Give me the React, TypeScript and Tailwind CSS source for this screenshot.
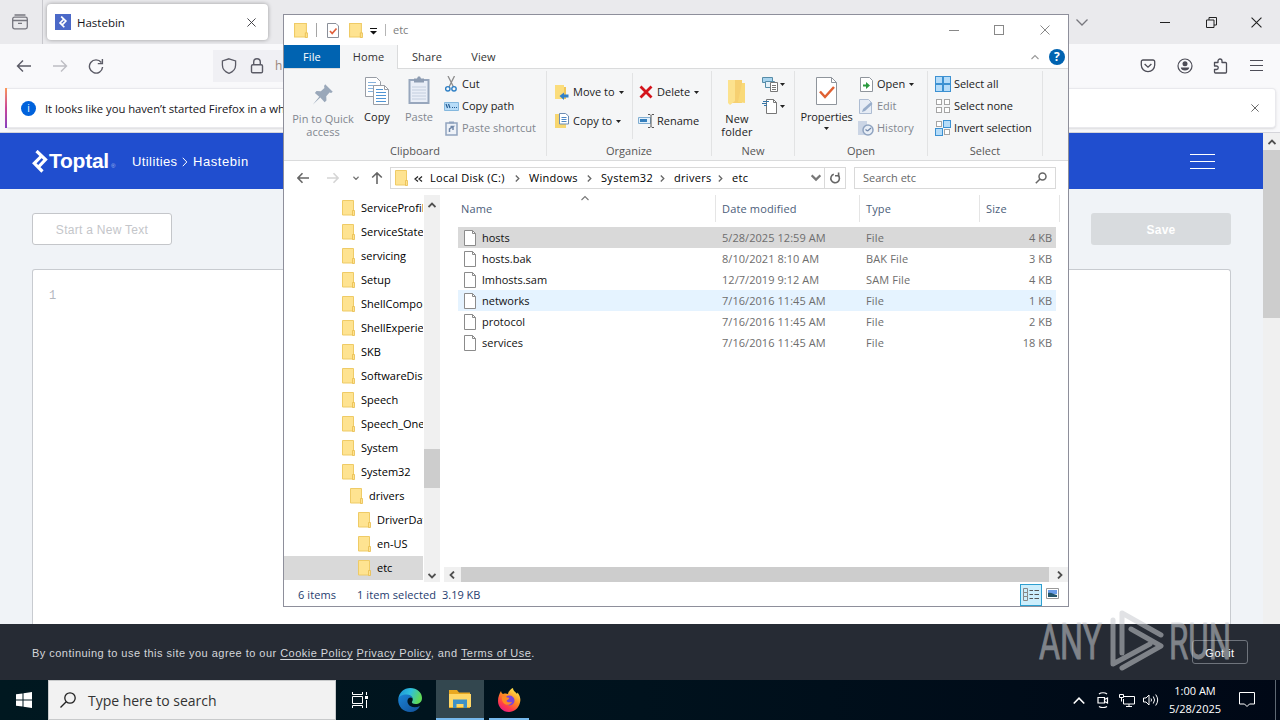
import type { ReactNode } from "react";
import clsx from "clsx";

const tree = [
  { name: "ServiceProfiles", depth: 0 },
  { name: "ServiceState", depth: 0 },
  { name: "servicing", depth: 0 },
  { name: "Setup", depth: 0 },
  { name: "ShellComponents", depth: 0 },
  { name: "ShellExperiences", depth: 0 },
  { name: "SKB", depth: 0 },
  { name: "SoftwareDistribution", depth: 0 },
  { name: "Speech", depth: 0 },
  { name: "Speech_OneCore", depth: 0 },
  { name: "System", depth: 0 },
  { name: "System32", depth: 0 },
  { name: "drivers", depth: 1 },
  { name: "DriverData", depth: 2 },
  { name: "en-US", depth: 2 },
  { name: "etc", depth: 2 },
];

const indent = ["pl-[58px]", "pl-[66px]", "pl-[74px]"];

const files = [
  { name: "hosts", date: "5/28/2025 12:59 AM", type: "File", size: "4 KB" },
  { name: "hosts.bak", date: "8/10/2021 8:10 AM", type: "BAK File", size: "3 KB" },
  { name: "lmhosts.sam", date: "12/7/2019 9:12 AM", type: "SAM File", size: "4 KB" },
  { name: "networks", date: "7/16/2016 11:45 AM", type: "File", size: "1 KB" },
  { name: "protocol", date: "7/16/2016 11:45 AM", type: "File", size: "2 KB" },
  { name: "services", date: "7/16/2016 11:45 AM", type: "File", size: "18 KB" },
];

type IconProps = { className?: string };

export default function App() {
  return (
    <div className="relative flex h-[720px] w-[1280px] flex-col overflow-hidden bg-[#f0f3f7] font-['Open_Sans',sans-serif] text-[11px] leading-4 text-black">
      <Browser />
      <Taskbar />
      <Explorer />
      <Watermark />
    </div>
  );
}

/* ---------- Browser ---------- */

function Browser() {
  return (
    <div className="flex h-[680px] flex-col">
      <div className="flex h-11 shrink-0 items-center bg-[#eaeaed] text-[#15141a]">
        <div className="flex h-11 w-[43px] items-center border-r border-[#c8c8cd] pl-3">
          <svg className="size-4" viewBox="0 0 16 16" fill="none" stroke="#77777f" strokeWidth="1.3">
            <path d="M3 1h10" strokeLinecap="round" />
            <rect x=".7" y="3.2" width="14.6" height="11.6" rx="1.8" />
            <path d="M.7 6.5h14.6M6 9.3h4" />
          </svg>
        </div>
        <div className="ml-1 flex h-9 w-[221px] items-center rounded bg-white pr-3 pl-2 shadow-[0_0_4px_rgba(0,0,0,0.35)]">
          <div className="flex size-4 items-center justify-center bg-[#4b69c8]">
            <ToptalMark className="h-3 w-2.5" />
          </div>
          <span className="ml-1.5 grow pt-px text-[11.5px]">Hastebin</span>
          <Cross className="size-[9px] text-[#33333a]" />
        </div>
        <div className="grow" />
        <svg className="mr-[72px] h-3 w-3" viewBox="0 0 12 12" fill="none" stroke="#77777d" strokeWidth="1.3">
          <path d="M.5 3.5 6 9l5.500-5.500" />
        </svg>
        <div className="mr-9 h-px w-2.5 bg-[#222]" />
        <svg className="mr-[34px] size-[11px]" viewBox="0 0 11 11" fill="none" stroke="#222">
          <path d="M.5 3h7.500v7.500H.5zM3 3V.5h7.500V8H8" />
        </svg>
        <Cross className="mr-[18px] size-[11px] text-[#222]" />
      </div>

      <div className="flex h-11 shrink-0 items-center bg-[#f9f9fb] text-[#5b5b66]">
        <svg className="ml-4 h-4 w-4" viewBox="0 0 16 16" fill="none" stroke="#5b5b66" strokeWidth="1.4">
          <path d="M15 5.500H1.500M7 0 1.500 5.500 7 11" transform="translate(0 2.500)" />
        </svg>
        <svg className="ml-5 h-4 w-4" viewBox="0 0 16 16" fill="none" stroke="#bdbdc3" strokeWidth="1.4">
          <path d="M1 8h13.500M9 2.500 14.500 8 9 13.500" />
        </svg>
        <svg className="ml-5 h-4 w-4" viewBox="0 0 16 16" fill="none" stroke="#5b5b66" strokeWidth="1.4">
          <path d="M13.300 4.500A6.600 6.600 0 1 0 14.600 9M14.400 1v4.600H9.800" />
        </svg>
        <div className="ml-[109px] flex h-8 w-[700px] items-center bg-[#f0f0f4] pl-2">
          <svg className="size-4" viewBox="0 0 16 16" fill="none" stroke="#5b5b66" strokeWidth="1.300">
            <path d="M8 .8 14.600 3v4c0 4-3 7-6.600 8.300C4.400 14 1.400 11 1.400 7V3z" />
          </svg>
          <svg className="ml-3 size-4" viewBox="0 0 16 16" fill="none" stroke="#5b5b66" strokeWidth="1.400">
            <rect x="2.500" y="6.800" width="11" height="8" rx="1.300" />
            <path d="M4.700 6.800V4a3.300 3.300 0 0 1 6.600 0v2.800" />
          </svg>
          <span className="ml-2.5 text-xs text-[#9a8578]">h</span>
        </div>
        <div className="grow" />
        <div className="flex w-[140px] items-center justify-between pr-[17px] text-[#4d4d57]">
          <svg className="size-4" viewBox="0 0 16 16" fill="none" stroke="currentColor" strokeWidth="1.300">
            <path d="M3 2h10a1.700 1.700 0 0 1 1.700 1.700V7A6.700 6.700 0 0 1 1.300 7V3.700A1.700 1.700 0 0 1 3 2z" />
            <path d="m4.600 6 3.400 3.200L11.400 6" />
          </svg>
          <svg className="size-4" viewBox="0 0 16 16" fill="none" stroke="currentColor" strokeWidth="1.200">
            <circle cx="8" cy="8" r="7" />
            <circle cx="8" cy="5.800" r="2.500" fill="currentColor" stroke="none" />
            <path d="M3.800 9.500h8.400c0 2-2 3-4.200 3s-4.200-1-4.200-3z" fill="currentColor" stroke="none" />
          </svg>
          <svg className="size-4" viewBox="0 0 16 16" fill="none" stroke="currentColor" strokeWidth="1.300">
            <path d="M1.500 4.500H5V3a2 2 0 0 1 4 0v1.500h3.500a1 1 0 0 1 1 1V14a1 1 0 0 1-1 1h-10a1 1 0 0 1-1-1v-2.500h2a1.700 1.700 0 0 0 0-3.500h-2z" strokeLinejoin="round" />
          </svg>
          <div className="-mt-0.5 flex w-[13px] flex-col gap-[4px]">
            <div className="h-px bg-current" />
            <div className="h-px bg-current" />
            <div className="h-px bg-current" />
          </div>
        </div>
      </div>

      <div className="flex h-[45px] shrink-0 border-b border-[#d5d5da] bg-[#f9f9fb] pb-1 pl-[5px]">
        <div className="h-10 w-[2px] bg-gradient-to-b from-[#ff9a56] via-[#d0459b] to-[#8a3fc4]" />
        <div className="flex h-10 w-[1269px] items-center rounded-r border border-l-0 border-[#e9e9ed] bg-white pr-4 pl-[14px] shadow-sm">
          <div className="flex size-[15px] items-center justify-center rounded-full bg-[#0062dc] text-[10px] text-white">i</div>
          <span className="ml-[9px] grow pt-px text-[11.300px] tracking-[-0.05px] whitespace-nowrap text-[#15141a]">
            It looks like you haven’t started Firefox in a while.
          </span>
          <Cross className="size-2 text-[#444]" />
        </div>
      </div>

      <div className="flex h-[491px] shrink-0">
        <Hastebin />
        <div className="flex w-[17px] shrink-0 flex-col bg-[#f0f0f0]">
          <div className="flex h-[17px] items-center justify-center">
            <Chevron className="w-2 text-[#505050]" dir="up" bold />
          </div>
          <div className="h-[168px] bg-[#cdcdcd]" />
        </div>
      </div>

      <div className="flex h-14 shrink-0 items-center bg-[#262b34] pr-8 pl-8 font-['Liberation_Sans',sans-serif] text-[#d4d6da]">
        <p className="grow pt-0.5 text-[11px] tracking-[0.47px]">
          By continuing to use this site you agree to our <u className="underline-offset-2">Cookie Policy</u>{" "}
          <u className="underline-offset-2">Privacy Policy</u>, and <u className="underline-offset-2">Terms of Use</u>.
        </p>
        <button className="h-6 w-14 rounded-[3px] border border-[#6f747c] pt-px text-[11px] tracking-[0.5px] text-white">Got it</button>
      </div>
    </div>
  );
}

function Hastebin() {
  return (
    <div className="flex w-[1263px] flex-col bg-[#f0f3f7] font-['Liberation_Sans',sans-serif]">
      <div className="flex h-14 shrink-0 items-center bg-[#204ecf] px-8 text-white">
        <ToptalMark className="h-[23px] w-[16px]" />
        <span className="ml-px w-[62px] text-[21px] font-bold tracking-[-0.25px]">Toptal</span>
        <span className="mt-2.5 w-[6px] text-[6px] text-[#a9b9ec]">®</span>
        <span className="ml-[15px] w-[45px] pt-px text-[13px] tracking-[0.4px]">Utilities</span>
        <svg className="mx-[5px] mt-0.5 h-2.5 w-[6px]" viewBox="0 0 6 10" fill="none" stroke="#fff">
          <path d="m.8.8 4 4.200-4 4.200" />
        </svg>
        <span className="pt-px text-[13px] tracking-[0.55px]">Hastebin</span>
        <div className="grow" />
        <div className="mr-4 flex w-[25px] flex-col gap-1.5">
          <div className="h-px bg-white" />
          <div className="h-px bg-white" />
          <div className="h-px bg-white" />
        </div>
      </div>
      <div className="flex h-20 shrink-0 items-center justify-between pr-8 pl-8">
        <button className="h-8 w-[140px] rounded-[3px] border border-[#c4c6ca] bg-white pt-px text-xs tracking-[0.28px] text-[#c4c6ca]">
          Start a New Text
        </button>
        <button className="h-8 w-[140px] rounded-[3px] bg-[#d8dbde] pt-px text-[12px] font-bold tracking-[0.2px] text-white">Save</button>
      </div>
      <div className="mr-8 ml-8 grow rounded-t-[3px] border border-b-0 border-[#c8cbd0] bg-white pt-[18px] pl-4 font-['Liberation_Mono',monospace] text-xs text-[#b4b8bf]">
        1
      </div>
    </div>
  );
}

/* ---------- Explorer window ---------- */

function Explorer() {
  return (
    <div className="absolute top-[14px] left-[283px] flex h-[593px] w-[786px] flex-col border border-[#8e8f9b] bg-white">
      <div className="flex h-[30px] shrink-0 items-center">
        <FolderIcon className="ml-[10px] h-[15px] w-[14px]" />
        <div className="ml-2 h-3.5 w-px bg-[#a5a5a5]" />
        <svg className="ml-2.5 h-[15px] w-3" viewBox="0 0 12 15">
          <path d="M.5.5H9L11.500 3v11.500H.5z" fill="#fff" stroke="#8a8f99" />
          <path d="m3 8 2.200 2.500L9.500 5.500" fill="none" stroke="#e0603c" strokeWidth="1.700" />
        </svg>
        <FolderIcon className="ml-2.5 h-[15px] w-[14px]" />
        <svg className="ml-[7px] mt-0.5 h-[7px] w-[7px]" viewBox="0 0 7 7">
          <path d="M0 0h7v1H0zM0 3h7L3.500 6.500z" fill="#111" />
        </svg>
        <div className="ml-2 h-3 w-px bg-[#b5b5b5]" />
        <span className="ml-[7px] grow text-[#7d7d7d]">etc</span>
        <div className="mr-[35px] h-px w-2.5 bg-[#888]" />
        <div className="mr-9 size-2.5 border border-[#888]" />
        <Cross className="mr-[18px] size-[10px] text-[#888]" />
      </div>

      <div className="flex h-6 shrink-0 border-b border-[#dadbdc] tracking-[0.1px] text-[#333]">
        <div className="flex h-[23px] w-14 items-center justify-center bg-[#0063b1] text-white">File</div>
        <div className="flex h-6 w-[58px] items-center justify-center border-r border-[#dadbdc] bg-[#f5f6f7]">Home</div>
        <div className="flex w-[58px] items-center justify-center">Share</div>
        <div className="flex w-[55px] items-center justify-center">View</div>
        <div className="grow" />
        <div className="mr-[3px] flex items-center gap-2.5">
          <Chevron className="w-2 text-[#999]" dir="up" />
          <div className="flex size-4 items-center justify-center rounded-full bg-[#0063b1] text-xs font-bold text-white">?</div>
        </div>
      </div>

      <Ribbon />

      <div className="flex h-[34px] shrink-0 items-center">
        <Arrow className="ml-[13px] size-3 text-[#666]" />
        <Arrow className="ml-[18px] size-3 rotate-180 text-[#d5d5d5]" />
        <Chevron className="ml-[14px] w-1.5 text-[#777]" dir="down" bold />
        <Arrow className="ml-3 size-3 rotate-90 text-[#666]" />
        <div className="ml-[7px] flex h-[22px] w-[456px] items-center border border-[#d9d9d9] pl-1 tracking-[0.3px]">
          <FolderIcon className="h-4 w-[13px]" />
          <svg className="mt-px mr-[7px] ml-[6px] h-[6px] w-[9px]" viewBox="0 0 9 6" fill="none" stroke="#222" strokeWidth="1.200">
            <path d="M4 .5 1 3l3 2.500M8 .5 5 3l3 2.500" />
          </svg>
          <span className="w-[76px]">Local Disk (C:)</span>
          <Crumb />
          <span className="w-[49px]">Windows</span>
          <Crumb />
          <span className="w-[50px]">System32</span>
          <Crumb />
          <span className="w-[35px]">drivers</span>
          <Crumb />
          <span className="grow">etc</span>
          <Chevron className="mr-[3px] w-2.5 text-[#777]" dir="down" bold />
          <div className="flex h-5 w-[21px] items-center justify-center border-l border-[#d9d9d9]">
            <svg className="size-3" viewBox="0 0 12 12" fill="none" stroke="#666" strokeWidth="1.600">
              <path d="M9 3.200A4.300 4.300 0 1 1 4.800 2.300" />
              <path d="M9.600.500v3.300H6" />
            </svg>
          </div>
        </div>
        <div className="ml-2 flex h-[22px] w-[202px] items-center justify-between border border-[#d9d9d9] pr-2 pl-2 text-[#666]">
          <span>Search etc</span>
          <svg className="size-3" viewBox="0 0 12 12" fill="none" stroke="#666" strokeWidth="1.500">
            <circle cx="7.500" cy="4.500" r="3.500" />
            <path d="M5 7 .8 11.200" />
          </svg>
        </div>
      </div>

      <div className="flex h-[387px] shrink-0">
        <div className="w-[139px] shrink-0 overflow-hidden pt-px">
          {tree.map((node) => (
            <div
              key={node.name}
              className={clsx(
                "flex h-6 items-center overflow-hidden whitespace-nowrap",
                indent[node.depth],
                node.name === "etc" && "bg-[#d9d9d9]",
              )}
            >
              <FolderIcon className="h-4 w-[13px] shrink-0" />
              <span className="ml-1.5">{node.name}</span>
            </div>
          ))}
        </div>
        <div className="ml-px flex w-4 shrink-0 flex-col items-center bg-[#f0f0f0]">
          <div className="flex h-[19px] items-center">
            <Chevron className="w-2 text-[#505050]" dir="up" bold />
          </div>
          <div className="grow" />
          <div className="h-[39px] w-4 bg-[#cdcdcd]" />
          <div className="h-[82px]" />
          <div className="flex h-3 items-center">
            <Chevron className="w-2 text-[#505050]" dir="down" bold />
          </div>
        </div>
        <FileList />
      </div>

      <div className="flex h-[23px] shrink-0 items-center pt-0.5 text-[#1e3c6e]">
        <span className="ml-[14px] w-[59px] tracking-[0.1px]">6 items</span>
        <span className="w-[85px] tracking-[0.1px]">1 item selected</span>
        <span>3.19 KB</span>
        <div className="grow" />
        <div className="mr-[4px] flex h-[22px] w-[22px] items-center justify-center border border-[#2d9fd0] bg-[#cceefc]">
          <svg className="h-3.5 w-4" viewBox="0 0 16 14" fill="none" stroke="#888">
            <path d="M.5.500h4v4h-4zM.5 4.500h4v4h-4zM.5 8.500h4v4h-4z" />
            <path d="M6.500 2.500H10m1.500 0H16M6.500 6.500H10m1.500 0H16M6.500 10.500H10m1.500 0H16" stroke="#555" />
          </svg>
        </div>
        <svg className="mr-[9px] mb-0.5 h-[11px] w-[13px]" viewBox="0 0 13 11">
          <path d="M.5.500h12v10H.5z" fill="#fff" stroke="#999" />
          <path d="M2 2h9v4H2z" fill="#6b9de8" />
          <path d="M2 5c3-1 6 1.500 9 2v2H2z" fill="#25566b" />
        </svg>
      </div>
    </div>
  );
}

function FileList() {
  return (
    <div className="flex grow flex-col">
      <div className="relative flex h-[27px] shrink-0 items-center pl-[21px] tracking-[0.15px] text-[#4c607a]">
        <Chevron className="absolute top-0 left-[141px] w-2 text-[#777]" dir="up" />
        <span className="grow">Name</span>
        <span className="flex h-full w-36 items-center border-l border-[#e5e5e5] pl-1.5">Date modified</span>
        <span className="flex h-full w-[120px] items-center border-l border-[#e5e5e5] pl-1.5">Type</span>
        <span className="mr-2 flex h-full w-[81px] items-center border-x border-[#e5e5e5] pl-1.5">Size</span>
      </div>
      <div className="mt-[5px] mr-3 ml-[18px] grow">
        {files.map((file) => (
          <div
            key={file.name}
            className={clsx(
              "flex h-[21px] items-center pr-1 pl-1.5 text-[#6d6d6d]",
              file.name === "hosts" && "bg-[#d9d9d9]",
              file.name === "networks" && "bg-[#e5f3ff]",
            )}
          >
            <svg className="h-4 w-3" viewBox="0 0 12 16">
              <path d="M.5.500h8l3 3v12H.5z" fill="#fff" stroke="#8b8b8b" />
              <path d="M8.500.500v3h3" fill="none" stroke="#8b8b8b" />
            </svg>
            <span className="ml-1.5 grow text-[#111]">{file.name}</span>
            <span className="w-36 tracking-[0.05px]">{file.date}</span>
            <span className="w-[120px] tracking-[0.15px]">{file.type}</span>
            <span className="w-[66px] text-right">{file.size}</span>
          </div>
        ))}
      </div>
      <div className="ml-1 flex h-[15px] shrink-0 items-center bg-[#f0f0f0]">
        <div className="flex w-[17px] justify-center">
          <Chevron className="mr-0.5 w-2 -rotate-90 text-[#505050]" dir="up" bold />
        </div>
        <div className="h-[15px] grow bg-[#cdcdcd]" />
        <div className="flex w-[19px] justify-center">
          <Chevron className="ml-0.5 w-2 rotate-90 text-[#505050]" dir="up" bold />
        </div>
      </div>
    </div>
  );
}

function Ribbon() {
  return (
    <div className="flex h-[92px] shrink-0 border-b border-[#dadbdc] bg-[#f5f6f7] text-[#222]">
      <Group label="Clipboard" className="w-[263px]">
        <div className="flex w-[78px] flex-col items-center text-[#828790]">
          <svg className="mt-2 mb-[5px] h-[26px] w-[26px]" viewBox="0 0 24 24" fill="#9aa8ba">
            <path d="m14 3 7 7-1.500 1-1.500-.3-3 3.300.2 4-1.700 1.500-4-4.300L2.500 22l6-7.500L4.500 11 6 9.300l4 .2 3.300-3L13 4.500z" />
          </svg>
          <span className="text-center leading-[13px]">
            Pin to Quick
            <br />
            access
          </span>
        </div>
        <div className="flex w-[30px] flex-col items-center">
          <CopyPages className="mt-1 h-7 w-6" />
          <span className="mt-1">Copy</span>
        </div>
        <div className="ml-3 flex w-[30px] flex-col items-center text-[#828790]">
          <ClipboardIcon className="mt-[3px] h-[29px] w-[22px]" />
          <span className="mt-1">Paste</span>
        </div>
        <div className="ml-[9px] flex flex-col">
          <RibbonRow
            icon={
              <svg className="h-4 w-3" viewBox="0 0 12 16" fill="none">
                <path d="M3 0 8.500 11M9.500 0 4 11" stroke="#8c8c8c" strokeWidth="1.300" />
                <circle cx="2.800" cy="12.800" r="2.200" stroke="#2d7fc5" strokeWidth="1.400" />
                <circle cx="9" cy="12.800" r="2.200" stroke="#2d7fc5" strokeWidth="1.400" />
              </svg>
            }
          >
            Cut
          </RibbonRow>
          <RibbonRow
            icon={
              <svg className="h-[9px] w-[15px]" viewBox="0 0 15 9">
                <path d="M.5.500h14v8H.5z" fill="#b7dcf8" stroke="#84b8de" />
                <path d="m2 2 1.500 4M4.500 2 6 6M8 5.500h1m1 0h1m1 0h1" fill="none" stroke="#235a91" strokeWidth="1.200" />
              </svg>
            }
          >
            Copy path
          </RibbonRow>
          <RibbonRow
            muted
            icon={
              <svg className="h-[15px] w-[13px]" viewBox="0 0 13 15">
                <path d="M1 2h11v12H1z" fill="#eef2f8" stroke="#91a4bf" strokeWidth="1.500" />
                <path d="M4 .5h5v2H4z" fill="#91a4bf" />
                <path d="M4.500 11V8L8 5.500H5.500M8 5.500V9" fill="none" stroke="#7087a8" strokeWidth="1.500" />
              </svg>
            }
          >
            Paste shortcut
          </RibbonRow>
        </div>
      </Group>

      <Group label="Organize" className="w-[165px]">
        <div className="flex w-[86px] flex-col gap-[7px] border-r border-[#e2e3e4] pt-2 pl-[7px]">
          <RibbonRow
            icon={
              <svg className="h-[15px] w-3.5" viewBox="0 0 14 15">
                <path d="M0 0h9v14H0z" fill="#fbdd7c" />
                <path d="M9 2h2v12H9z" fill="#f0c557" />
                <path d="M13.500 9.500v3H9V15l-4.500-4L9 7.500v2z" fill="#3480c8" />
              </svg>
            }
            caret
          >
            Move to
          </RibbonRow>
          <RibbonRow
            icon={
              <svg className="h-4 w-3.5" viewBox="0 0 14 16">
                <path d="M0 1h11v14H0z" fill="#f7d670" />
                <path d="M4.500.5h6L13.500 3v8h-9z" fill="#fff" stroke="#6d8db4" />
                <path d="M6.500 4.500h5m-5 2h5m-5 2h5" stroke="#4d87c5" />
              </svg>
            }
            caret
          >
            Copy to
          </RibbonRow>
        </div>
        <div className="flex flex-col gap-[7px] pt-2 pl-[5px]">
          <RibbonRow
            icon={
              <svg className="h-3.5 w-3.5" viewBox="0 0 14 14">
                <path d="m1.500 1.500 11 11M12.500 1.500l-11 11" stroke="#d4141c" strokeWidth="2.800" />
              </svg>
            }
            caret
          >
            Delete
          </RibbonRow>
          <RibbonRow
            icon={
              <svg className="h-3.5 w-4" viewBox="0 0 16 14" fill="none">
                <path d="M.5 3.500h12v6H.5z" fill="#e2f0fb" stroke="#80add1" />
                <path d="M2 5h7v3H2z" fill="#347fbd" />
                <path d="M10 .5h2l1 1 1-1h2M13 1.500v11M10 13.500h2l1-1 1 1h2" stroke="#555" />
              </svg>
            }
          >
            Rename
          </RibbonRow>
        </div>
      </Group>

      <Group label="New" className="w-[83px]">
        <div className="flex w-[50px] shrink-0 flex-col items-center">
          <svg className="mt-[5px] h-7 w-5" viewBox="0 0 20 28">
            <path d="M1 2h14v23H1z" fill="#f6d071" />
            <path d="M1 2h7v21l-5 4-2-2z" fill="#fce28e" />
            <path d="M15 5h3v20l-7-1z" fill="#f9d978" />
          </svg>
          <span className="mt-1.5 w-10 text-center leading-[13px] tracking-[0.15px]">
            New
            <br />
            folder
          </span>
        </div>
        <div className="flex flex-col">
          <div className="flex h-[22px] items-center gap-px">
            <svg className="size-[17px]" viewBox="0 0 17 17" fill="#fff" stroke="#777">
              <path d="M.5 1.500h10v5H.5z" fill="#a8d4ee" stroke="#568ca8" />
              <path d="M3.500 5.500h9v6h-9z" fill="#e5f1f8" stroke="#568ca8" />
              <path d="M8.500 6.500h7v9h-7zM10 9.500h4m-4 2h4m-4 2h4" />
            </svg>
            <Caret />
          </div>
          <div className="flex h-[22px] items-center gap-px">
            <svg className="size-[17px]" viewBox="0 0 17 17" fill="none" stroke="#777">
              <path d="M4.500 1.500h7l3 3v11h-10z" fill="#fff" />
              <path d="M11.500 1.500v3h3" />
              <path d="M1 3.500h6M0 5.500h5M2 7.500h3" stroke="#3575a7" />
            </svg>
            <Caret />
          </div>
        </div>
      </Group>

      <Group label="Open" className="w-[133px]">
        <div className="flex w-[63px] shrink-0 flex-col items-center">
          <svg className="mt-1 h-7 w-[21px]" viewBox="0 0 21 28">
            <path d="M.5.500h15l5 5v22H.5z" fill="#fff" stroke="#8f959c" />
            <path d="M15.500.500v5h5" fill="none" stroke="#8f959c" />
            <path d="m4 14.500 5 5.500 9-10" fill="none" stroke="#e06032" strokeWidth="2.500" />
          </svg>
          <span className="mt-1 mb-0.5 tracking-[-0.1px]">Properties</span>
          <Caret />
        </div>
        <div className="flex flex-col">
          <RibbonRow
            icon={
              <svg className="h-[15px] w-[13px]" viewBox="0 0 13 15">
                <path d="M.5.500h9l3 3v11H.5z" fill="#fff" stroke="#8f959c" />
                <path d="M3 7.500h3V5l4 3.500L6 12V9.500H3z" fill="#2b9a3e" />
              </svg>
            }
            caret
          >
            Open
          </RibbonRow>
          <RibbonRow
            muted
            icon={
              <svg className="h-[15px] w-[14px]" viewBox="0 0 14 15">
                <path d="M.5.500h9l3 3v11H.5z" fill="#e6ecf5" stroke="#adbcd2" />
                <path d="m3 13 1-3L12 3l1.500 2L6 12z" fill="#98adca" />
              </svg>
            }
          >
            Edit
          </RibbonRow>
          <RibbonRow
            muted
            icon={
              <svg className="h-[15px] w-4" viewBox="0 0 16 15">
                <path d="M0 0h9v14H0z" fill="#cbd5e5" />
                <circle cx="10" cy="9" r="5" fill="#e8eef6" stroke="#8fa3c0" strokeWidth="1.500" />
                <path d="M9.500 10 13 7M9.500 10 7.500 8.500" stroke="#7288aa" strokeWidth="1.300" />
              </svg>
            }
          >
            History
          </RibbonRow>
        </div>
      </Group>

      <Group label="Select" className="w-[115px]">
        <div className="flex flex-col pl-[7px] tracking-[-0.05px]">
          <RibbonRow icon={<Tiles on={[true, true, true, true]} />}>Select all</RibbonRow>
          <RibbonRow icon={<Tiles on={[false, false, false, false]} />}>Select none</RibbonRow>
          <RibbonRow icon={<Tiles on={[false, true, true, false]} />}>Invert selection</RibbonRow>
        </div>
      </Group>
    </div>
  );
}

function Group({ label, className, children }: { label: string; className: string; children: ReactNode }) {
  return (
    <div className={clsx("mt-0.5 mb-1 flex shrink-0 flex-col border-r border-[#e2e3e4]", className)}>
      <div className="flex h-[68px] shrink-0 pt-0.5">{children}</div>
      <div className="mt-1 text-center text-[#555]">{label}</div>
    </div>
  );
}

function RibbonRow({
  icon,
  muted,
  caret,
  children,
}: {
  icon: ReactNode;
  muted?: boolean;
  caret?: boolean;
  children: ReactNode;
}) {
  return (
    <div className={clsx("flex h-[22px] shrink-0 items-center whitespace-nowrap", muted && "text-[#828790]")}>
      <span className="flex w-4 justify-center">{icon}</span>
      <span className="ml-[3px]">{children}</span>
      {caret && <Caret className="ml-1" />}
    </div>
  );
}

function Tiles({ on }: { on: boolean[] }) {
  return (
    <svg className="size-4" viewBox="0 0 16 16">
      {on.map((active, i) => (
        <rect
          key={i}
          x={(i % 2) * 8 + (active ? 0.5 : 1.5)}
          y={i < 2 ? (active ? 0.5 : 1.5) : active ? 8.5 : 9.5}
          width={active ? 7 : 5}
          height={active ? 7 : 5}
          fill={active ? "#b5dcf9" : "#fff"}
          stroke={active ? "#3c91d2" : "#a5a5a5"}
        />
      ))}
    </svg>
  );
}

/* ---------- Taskbar ---------- */

function Taskbar() {
  return (
    <div className="flex h-10 shrink-0 items-center bg-gradient-to-r from-[#001820] via-[#00121d] to-[#000816] text-white">
      <div className="flex w-12 justify-center">
        <svg className="size-4" viewBox="0 0 16 16" fill="#fff">
          <path d="M0 2.300 6.500 1.400v6.100H0zM7.500 1.200 16 0v7.500H7.500zM0 8.500h6.500v6.100L0 13.700zM7.500 8.500H16V16l-8.500-1.200z" />
        </svg>
      </div>
      <div className="flex h-10 w-72 items-center border border-[#c8cacb] bg-[#f2f2f2] pl-[11px] text-[#333]">
        <svg className="size-4" viewBox="0 0 16 16" fill="none" stroke="#222" strokeWidth="1.300">
          <circle cx="10" cy="6" r="5.200" />
          <path d="M6.200 9.800.5 15.500" />
        </svg>
        <span className="ml-3 pt-0.5 text-sm tracking-[-0.02px]">Type here to search</span>
      </div>
      <div className="flex w-12 justify-center">
        <svg className="size-4" viewBox="0 0 16 16" fill="none" stroke="#fff">
          <path d="M.5 0v2.500h10V0M.5 4.500h10v7H.5zM.5 16v-2.500h10V16M14.500 0v3M14.500 8v8" />
          <path d="M13 4h3v3h-3z" fill="#fff" stroke="none" />
        </svg>
      </div>
      <div className="flex w-[52px] justify-center">
        <EdgeIcon className="size-6" />
      </div>
      <div className="flex h-10 w-12 flex-col items-center border-b-2 border-[#76b9ed] bg-[#33474f] pt-[9px]">
        <svg className="h-5 w-[22px]" viewBox="0 0 22 20">
          <path d="M0 1h8l2 2.500h11V19H0z" fill="#e9a820" />
          <path d="M0 5h22v13H0z" fill="#ffd766" />
          <path d="M4 19v-8.500h14V19h-3.500v-4h-7v4z" fill="#3f91c6" />
        </svg>
      </div>
      <div className="ml-[5px] flex h-10 w-10 flex-col items-center border-b-2 border-[#76b9ed] pt-2">
        <FirefoxIcon className="size-6" />
      </div>
      <div className="grow" />
      <Chevron className="mr-3 w-3 text-white" dir="up" />
      <svg className="mr-2.5 h-4 w-3" viewBox="0 0 12 16" fill="none" stroke="#fff" strokeWidth="1.200">
        <path d="M1 5.500h6.500v5.500H1zM7.500 7.500l3-1.500v5l-3-1.500M2 2c2-1.700 6-1.700 8 0M2 14.500c2 1.500 6 1.500 8 0" />
      </svg>
      <svg className="mr-2 h-[15px] w-4" viewBox="0 0 16 15" fill="none" stroke="#fff">
        <path d="M5 3.500h10.500v7.500h-11V6M7 13.500h6M10 11v2.500M.5 1.500h4v3h-4zM2.500 4.500v4" />
      </svg>
      <svg className="mr-[8px] h-4 w-[17px]" viewBox="0 0 17 16" fill="none" stroke="#fff">
        <path d="M.5 6h2.500l3-3v10l-3-3H.5zM8 6.500q1 1.500 0 3M10.300 4.500q2.500 3.500 0 7M12.700 2.500q4 5.500 0 11" />
      </svg>
      <div className="w-[54px] text-center text-[11px] leading-[18px] whitespace-nowrap">
        1:00 AM
        <br />
        5/28/2025
      </div>
      <svg className="ml-[17px] size-4" viewBox="0 0 16 16" fill="none" stroke="#fff">
        <path d="M.5.500h15v11.500H10.500L8 14.500 5.500 12H.5z" />
      </svg>
      <div className="mr-1 ml-5 h-10 w-px bg-[#5e6873]" />
    </div>
  );
}

function Watermark() {
  return (
    <svg className="absolute top-[604px] left-[1034px] h-[72px] w-[200px] opacity-55" viewBox="0 0 200 72">
      <g fill="#c9ccd0" stroke="#c9ccd0" strokeWidth=".9" fontFamily="Roboto, sans-serif" fontSize="50">
        <text x="5" y="55" textLength="63" lengthAdjust="spacingAndGlyphs">
          ANY
        </text>
        <text x="135" y="55" textLength="62" lengthAdjust="spacingAndGlyphs">
          RUN
        </text>
      </g>
      <path
        d="M79 16v44l37-20M88 49V9l39 22M97 25l30 17-39 22"
        fill="none"
        stroke="#c9ccd0"
        strokeWidth="5"
        strokeLinejoin="round"
        strokeLinecap="round"
      />
    </svg>
  );
}

/* ---------- Icons ---------- */

function Cross({ className }: IconProps) {
  return (
    <svg className={className} viewBox="0 0 10 10" fill="none" stroke="currentColor">
      <path d="m.5.500 9 9M9.500.500l-9 9" />
    </svg>
  );
}

function Chevron({ className, dir, bold }: IconProps & { dir: "up" | "down"; bold?: boolean }) {
  return (
    <svg
      className={clsx("shrink-0", className)}
      viewBox="0 0 8 6"
      fill="none"
      stroke="currentColor"
      strokeWidth={bold ? 1.8 : 1.1}
    >
      <path d={dir === "up" ? "m.5 5 3.500-3.500L7.500 5" : "m.5 1 3.500 3.500L7.500 1"} />
    </svg>
  );
}

function Arrow({ className }: IconProps) {
  return (
    <svg className={className} viewBox="0 0 12 12" fill="none" stroke="currentColor" strokeWidth="1.600">
      <path d="M12 6H1M5.500 1.200.9 6l4.600 4.800" />
    </svg>
  );
}

function Caret({ className }: IconProps) {
  return (
    <svg className={clsx("h-[3px] w-[5px] shrink-0", className)} viewBox="0 0 5 3" fill="#222">
      <path d="M0 0h5L2.500 3z" />
    </svg>
  );
}

function Crumb() {
  return (
    <svg className="mr-[9px] ml-[9px] h-[7px] w-[5px]" viewBox="0 0 5 7" fill="none" stroke="#666" strokeWidth="1.300">
      <path d="m.8.500 3 3-3 3" />
    </svg>
  );
}

function FolderIcon({ className }: IconProps) {
  return (
    <svg className={className} viewBox="0 0 13 16" preserveAspectRatio="none">
      <path d="M.5.500h11v14.500H.5z" fill="#fee391" stroke="#efcb66" />
      <path d="M10.500 10.500h2v5h-2z" fill="#fee391" stroke="#e8bd4c" strokeWidth=".8" />
    </svg>
  );
}

function CopyPages({ className }: IconProps) {
  return (
    <svg className={className} viewBox="0 0 24 28" fill="none">
      <path d="M.5.500h11l4 4v15H.5z" fill="#fff" stroke="#989da5" />
      <path d="M3 5.500h8M3 8.500h8M3 11.500h8M3 14.500h8" stroke="#86b2dc" />
      <path d="M8.500 8.500h11l4 4v15h-15z" fill="#fff" stroke="#989da5" />
      <path d="M19.500 8.500v4h4" stroke="#989da5" />
      <path d="M11 12.500h7M11 15.500h10M11 18.500h10M11 21.500h10M11 24.500h10" stroke="#4f94d4" />
    </svg>
  );
}

function ClipboardIcon({ className }: IconProps) {
  return (
    <svg className={className} viewBox="0 0 22 28" fill="none">
      <path d="M1.500 3.500h19v23h-19z" fill="#e9eef7" stroke="#98a7bd" strokeWidth="2" />
      <path d="M6 2h3l1-2h2l1 2h3v4H6z" fill="#8d9cb2" />
      <path d="M4 10.500h14M4 13.500h14M4 16.500h14M4 19.500h14M4 22.500h14" stroke="#c3cede" />
    </svg>
  );
}

function ToptalMark({ className }: IconProps) {
  return (
    <svg className={className} viewBox="0 0 16 23" fill="none" stroke="#fff" strokeWidth="3.200">
      <path d="M4.500 1 13.500 9.500 5.500 18M10.500 5 2.300 13.300 10.500 21.500" />
    </svg>
  );
}

function EdgeIcon({ className }: IconProps) {
  return (
    <svg className={className} viewBox="0 0 24 24">
      <defs>
        <linearGradient id="edgeTop" x1="0" x2="1" y1="0" y2=".3">
          <stop offset="0" stopColor="#1b8fd6" />
          <stop offset=".55" stopColor="#2fc0dc" />
          <stop offset="1" stopColor="#5fd95a" />
        </linearGradient>
        <linearGradient id="edgeBase" x1="0" x2="1" y1="0" y2="1">
          <stop offset="0" stopColor="#1a84d6" />
          <stop offset="1" stopColor="#124f98" />
        </linearGradient>
      </defs>
      <path d="M.3 11C1 4.500 6 0 12.300 0 19 0 24 4.500 24 10c0 4-3 6-6.500 6-3 0-4-1-3.500-2.200C16 11 14 7.500 9.500 7.500 5 7.500 1.200 9 .3 11z" fill="url(#edgeTop)" />
      <path d="M.2 12C.4 8 4.500 6.500 8.500 6.500c3.500 0 5.500 1.800 6 3.500-4-2-6 2-4.500 5.500 1.700 3.800 7 5 12 2.500C20 22 16.500 24 12 24 5.500 24 .2 19 .2 12z" fill="url(#edgeBase)" />
    </svg>
  );
}

function FirefoxIcon({ className }: IconProps) {
  return (
    <svg className={className} viewBox="0 0 24 24">
      <defs>
        <linearGradient id="fox" x1=".8" x2=".2" y1="0" y2="1">
          <stop offset="0" stopColor="#fff04f" />
          <stop offset=".45" stopColor="#ff8a22" />
          <stop offset=".75" stopColor="#ff3b4b" />
          <stop offset="1" stopColor="#e3178b" />
        </linearGradient>
      </defs>
      <path d="M4 3c.3 1.500 1 2.500 2 3 2-.8 4-.5 5 0C11.500 3 14 .8 16 0c0 3 3 4 4 6l.5-1.500C23 7.500 24 11 23 14.500 21.500 20.500 17 24 12 24 5.500 24 1 19 1 13c0-4 1.500-7.500 3-10z" fill="url(#fox)" />
      <circle cx="12.500" cy="12.500" r="5" fill="#7a45db" />
      <path d="M5 8.500c3-1 4 1 7 1.200 1 1.300-2.500 2-2.500 3.300 1 2 4 1 5.500 1-1 2.500-5 4-8 1.500C5 13.500 4.500 11 5 8.500z" fill="#ff8a22" />
    </svg>
  );
}
